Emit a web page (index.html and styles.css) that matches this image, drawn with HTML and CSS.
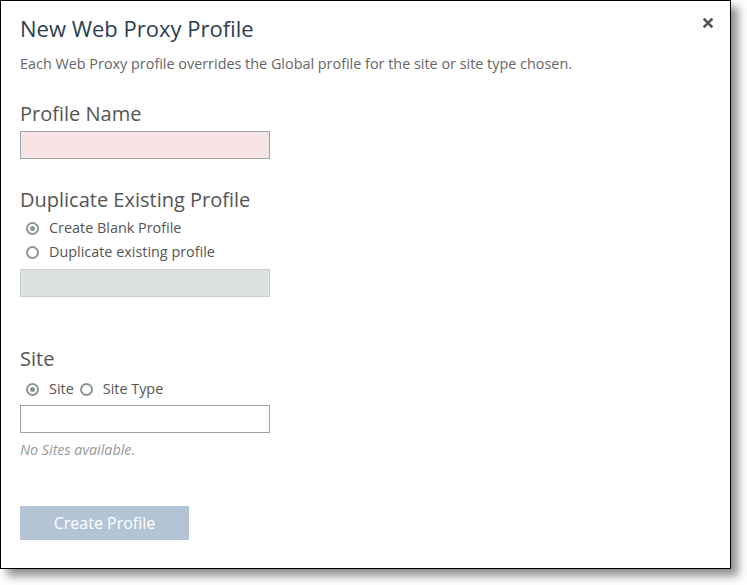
FILE: index.html
```html
<!DOCTYPE html>
<html>
<head>
<meta charset="utf-8">
<link rel="stylesheet" href="styles.css">
</head>
<body>
<div class="dialog">
  <button class="close" aria-label="Close">
    <svg width="10" height="10" viewBox="0 0 10 10"><path d="M1.5 1.5 L8.5 8.5 M8.5 1.5 L1.5 8.5" stroke="#555" stroke-width="2.6" stroke-linecap="square"/></svg>
  </button>
  <h1 class="title">New Web Proxy Profile</h1>
  <p class="intro">Each Web Proxy profile overrides the Global profile for the site or site type chosen.</p>

  <section class="group group-name">
    <h2 class="label">Profile Name</h2>
    <div class="field field-error"></div>
  </section>

  <section class="group group-dup">
    <h2 class="label">Duplicate Existing Profile</h2>
    <div class="radios">
      <label class="radio"><span class="dot checked"></span>Create Blank Profile</label>
      <label class="radio"><span class="dot"></span>Duplicate existing profile</label>
    </div>
    <div class="field field-disabled"></div>
  </section>

  <section class="group group-site">
    <h2 class="label">Site</h2>
    <div class="radios inline">
      <label class="radio"><span class="dot checked"></span>Site</label>
      <label class="radio"><span class="dot"></span>Site Type</label>
    </div>
    <div class="field"></div>
    <p class="hint">No Sites available.</p>
  </section>

  <button class="submit">Create Profile</button>
</div>
</body>
</html>
```
FILE: styles.css
```css
* { box-sizing: border-box; }
html, body { margin: 0; padding: 0; background: #fff; }
body {
  font-family: "Open Sans", "Noto Sans", sans-serif;
  padding-bottom: 16px;
  min-height: 585px;
}

.dialog {
  position: relative;
  width: 731px;
  height: 569px;
  border: 1px solid #000;
  background: #fff;
  box-shadow: 7px 7px 9px rgba(0,0,0,0.45);
  padding: 13px 19px 0 19px;
}

.close {
  position: absolute;
  top: 17px;
  right: 17px;
  width: 10px;
  height: 10px;
  padding: 0;
  border: 0;
  background: none;
  display: block;
}
.close svg { display: block; }

.title {
  margin: 0;
  font-size: 22px;
  font-weight: 400;
  line-height: 28px;
  color: #2c3e50;
}

.intro {
  margin: 12px 0 0 0;
  font-size: 14.4px;
  line-height: 20px;
  color: #666;
}

.group {
  display: flex;
  flex-direction: column;
  align-items: flex-start;
}
.group-name { margin-top: 28px; }
.group-dup { margin-top: 29px; }
.group-site { margin-top: 50px; }

.label {
  margin: 0;
  font-size: 20px;
  font-weight: 400;
  line-height: 24px;
  color: #555;
}

.field {
  width: 250px;
  height: 28px;
  border: 1px solid #9aa5a6;
  background: #fff;
}
.group-name .field { margin-top: 5px; }
.field-error { background: #f9e4e5; }
.field-disabled { background: #dde1e2; border-color: #c9cfd0; }

.radios { display: flex; flex-direction: column; gap: 4px; margin: 6px 0 7px 0; }
.radios.inline { flex-direction: row; gap: 6px; margin: 8px 0 6px 0; }

.radio {
  display: flex;
  align-items: center;
  font-size: 14.4px;
  line-height: 20px;
  color: #555;
  padding-left: 6px;
}
.radios.inline .radio + .radio { padding-left: 0; }

.dot {
  width: 13px;
  height: 13px;
  border: 2px solid #8a9596;
  border-radius: 50%;
  margin-right: 10px;
  position: relative;
  flex: none;
}
.dot.checked::after {
  content: "";
  position: absolute;
  left: 2px; top: 2px;
  width: 5px; height: 5px;
  border-radius: 50%;
  background: #8a9596;
}

.hint {
  margin: 7px 0 0 0;
  font-size: 14.3px;
  font-style: italic;
  line-height: 20px;
  color: #999;
}

.submit {
  margin-top: 46px;
  width: 169px;
  height: 34px;
  border: 0;
  background: #b3c5d5;
  color: #fff;
  font-family: "Open Sans", "Noto Sans", sans-serif;
  font-size: 16px;
  padding: 0;
  display: block;
}
```
